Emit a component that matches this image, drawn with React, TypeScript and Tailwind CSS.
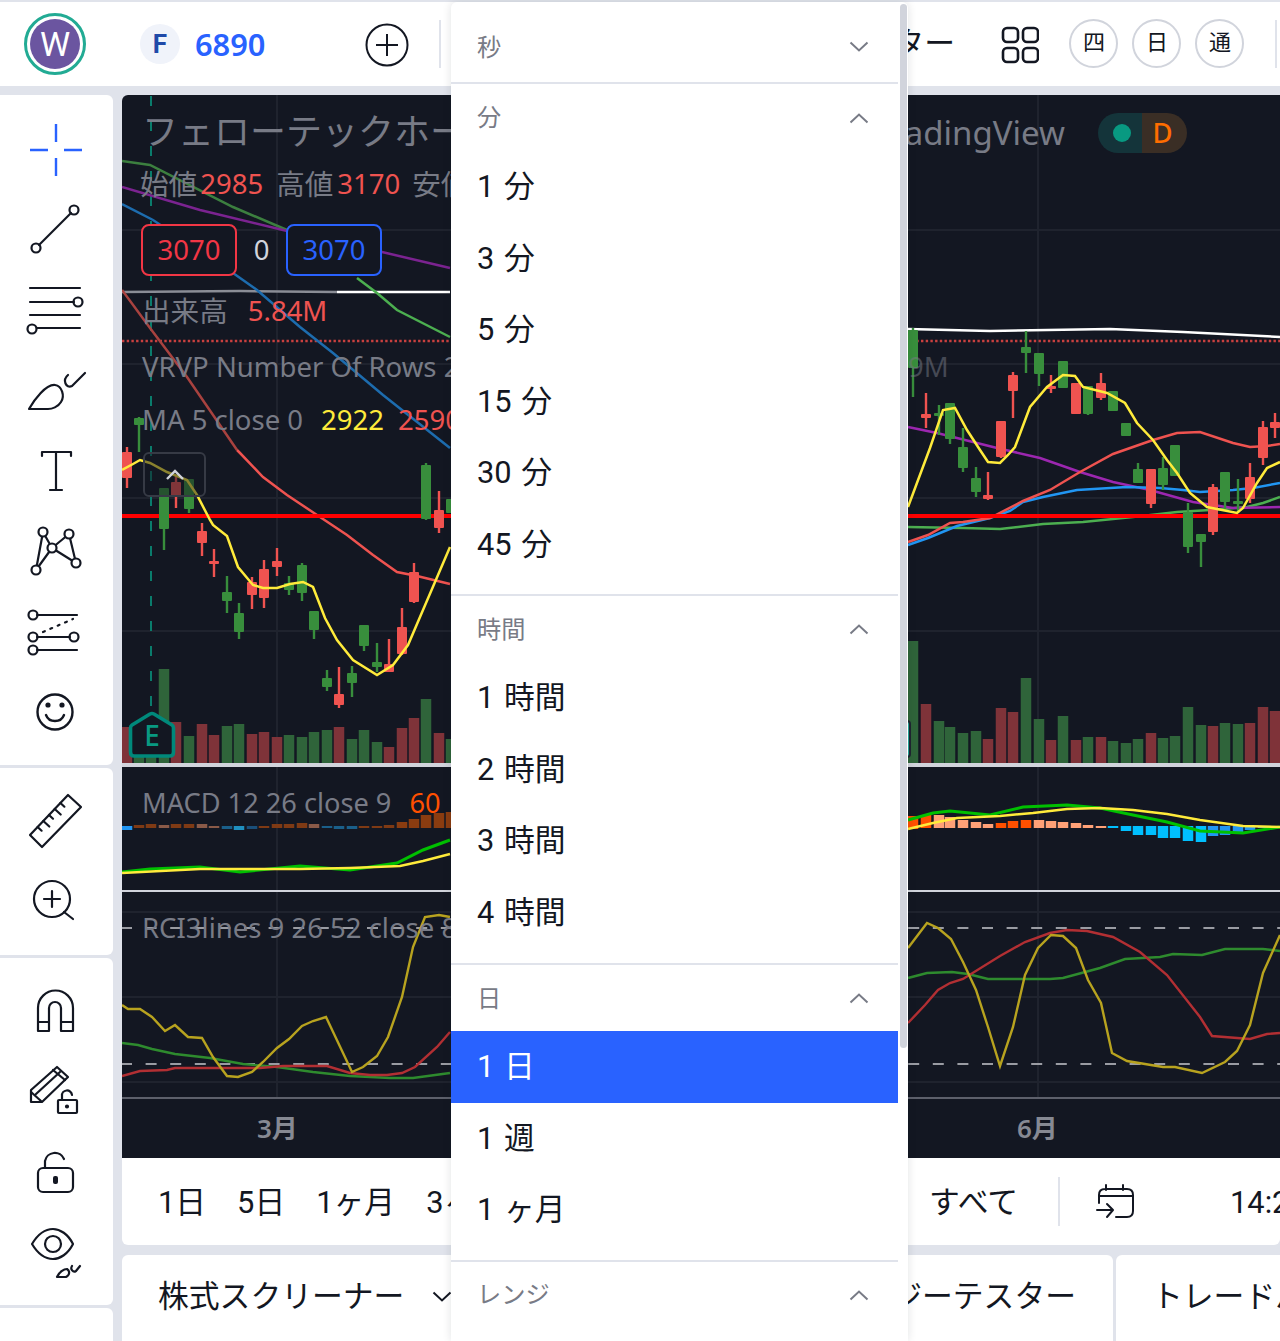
import React from "react";

type C = [number, number, number, number, number, "r" | "g"];
const RED = "#ef5350";
const GREEN = "#388e3c";
const candles: C[] = [
  [127, 447, 488, 452, 478, "r"],
  [139, 417, 452, 418, 425, "g"],
  [164, 488, 550, 488, 529, "g"],
  [176, 475, 508, 482, 497, "r"],
  [189, 479, 513, 479, 509, "g"],
  [202, 523, 556, 531, 543, "r"],
  [214, 549, 577, 561, 564, "r"],
  [227, 576, 613, 592, 601, "g"],
  [239, 603, 639, 613, 632, "g"],
  [252, 577, 609, 582, 595, "r"],
  [264, 560, 608, 569, 598, "r"],
  [277, 548, 576, 561, 567, "r"],
  [289, 576, 595, 583, 590, "g"],
  [302, 563, 601, 565, 593, "g"],
  [314, 611, 639, 611, 630, "g"],
  [327, 670, 691, 678, 687, "g"],
  [339, 667, 708, 694, 705, "r"],
  [352, 666, 697, 673, 683, "g"],
  [364, 625, 651, 625, 646, "g"],
  [377, 643, 672, 662, 667, "g"],
  [389, 639, 672, 664, 672, "r"],
  [402, 608, 655, 627, 654, "r"],
  [414, 563, 603, 572, 602, "r"],
  [426, 463, 520, 465, 519, "g"],
  [439, 491, 533, 510, 528, "r"],
  [451, 499, 513, 499, 513, "g"],
  [913, 328, 397, 330, 368, "g"],
  [926, 393, 428, 414, 418, "r"],
  [939, 405, 435, 413, 416, "g"],
  [950, 403, 444, 403, 439, "g"],
  [963, 428, 472, 447, 468, "g"],
  [976, 467, 497, 478, 492, "g"],
  [988, 472, 500, 495, 499, "r"],
  [1001, 421, 458, 421, 457, "r"],
  [1013, 372, 418, 375, 391, "r"],
  [1026, 331, 373, 347, 353, "g"],
  [1039, 353, 386, 353, 374, "g"],
  [1051, 375, 393, 386, 389, "r"],
  [1063, 361, 388, 361, 388, "g"],
  [1076, 383, 414, 383, 414, "r"],
  [1088, 386, 415, 386, 414, "g"],
  [1101, 373, 400, 383, 398, "r"],
  [1113, 391, 411, 391, 411, "g"],
  [1126, 423, 436, 423, 436, "g"],
  [1138, 463, 483, 469, 483, "g"],
  [1151, 469, 508, 469, 504, "r"],
  [1163, 457, 490, 468, 485, "g"],
  [1175, 445, 476, 445, 476, "g"],
  [1188, 503, 553, 512, 547, "g"],
  [1201, 534, 567, 534, 542, "g"],
  [1213, 484, 535, 487, 532, "r"],
  [1225, 472, 509, 472, 502, "g"],
  [1238, 479, 513, 501, 503, "g"],
  [1250, 463, 503, 477, 499, "r"],
  [1263, 421, 465, 427, 458, "r"],
  [1275, 413, 438, 422, 428, "r"],
];
const volumes: [number, number, "r" | "g"][] = [
  [127, 727, "r"], [139, 724, "g"], [151, 724, "g"], [164, 669, "g"], [176, 722, "r"], [189, 736, "g"], [202, 724, "r"], [214, 735, "r"],
  [227, 726, "g"], [239, 724, "g"], [252, 734, "r"], [264, 732, "r"], [277, 737, "r"], [289, 735, "g"],
  [302, 737, "g"], [314, 732, "g"], [327, 730, "g"], [339, 727, "r"], [352, 739, "g"], [364, 730, "g"],
  [377, 742, "g"], [389, 747, "r"], [402, 728, "r"], [414, 718, "r"], [426, 699, "g"], [439, 733, "r"], [451, 739, "g"],
  [913, 641, "g"], [926, 704, "r"], [939, 721, "g"], [950, 727, "g"], [963, 733, "g"], [976, 731, "g"],
  [988, 739, "r"], [1001, 708, "r"], [1013, 712, "r"], [1026, 678, "g"], [1039, 719, "g"], [1051, 740, "r"],
  [1063, 716, "g"], [1076, 740, "r"], [1088, 737, "g"], [1101, 737, "r"], [1113, 741, "g"], [1126, 743, "g"],
  [1138, 739, "g"], [1151, 733, "r"], [1163, 738, "g"], [1175, 736, "g"], [1188, 707, "g"], [1201, 725, "g"],
  [1213, 726, "r"], [1225, 723, "g"], [1238, 724, "g"], [1250, 723, "r"], [1263, 707, "r"], [1275, 711, "r"],
];
const macdBars: [number, number, number, string][] = [
  [127, 826, 830, "#2196f3"], [139, 825, 828, "#7f3a14"], [151, 824, 828, "#7f3a14"], [164, 825, 828, "#8a5a48"],
  [176, 824, 828, "#7f3a14"], [189, 824, 828, "#7f3a14"], [202, 824, 828, "#8a5a48"], [214, 826, 828, "#8a5a48"],
  [227, 826, 829, "#1a5f8a"], [239, 826, 830, "#1f8fbf"], [252, 826, 829, "#1a4f7a"], [264, 826, 828, "#7f3a14"],
  [277, 824, 828, "#7f3a14"], [289, 824, 828, "#7f3a14"], [302, 823, 828, "#7f3a14"], [314, 824, 828, "#8a5a48"],
  [327, 826, 828, "#1a5f8a"], [339, 826, 829, "#1a5f8a"], [352, 826, 829, "#1a5f8a"], [364, 826, 828, "#7f3a14"],
  [377, 826, 828, "#7f3a14"], [389, 825, 828, "#7f3a14"], [402, 822, 828, "#8a3c10"], [414, 819, 828, "#8a3c10"],
  [426, 815, 828, "#8a3c10"], [439, 813, 828, "#8a3c10"], [451, 812, 828, "#8a3c10"],
  [913, 816, 829, "#ff5000"], [926, 815, 828, "#ff5000"], [939, 815, 828, "#ffa177"], [950, 817, 828, "#ffa177"],
  [963, 820, 828, "#ffa177"], [976, 822, 828, "#ffa177"], [988, 824, 828, "#ffa177"], [1001, 823, 828, "#ff5000"],
  [1013, 821, 828, "#ff5000"], [1026, 820, 828, "#ff5000"], [1039, 820, 828, "#ffa177"], [1051, 821, 828, "#ffa177"],
  [1063, 822, 828, "#ffa177"], [1076, 823, 828, "#ffa177"], [1088, 825, 828, "#ffa177"], [1101, 826, 828, "#ffa177"],
  [1113, 826, 828, "#00bfff"], [1126, 826, 831, "#00bfff"], [1138, 826, 835, "#00bfff"], [1151, 826, 835, "#00bfff"],
  [1163, 826, 838, "#00bfff"], [1175, 826, 838, "#00bfff"], [1188, 826, 841, "#00bfff"], [1201, 826, 842, "#00bfff"],
  [1213, 826, 836, "#2196f3"], [1225, 826, 835, "#2196f3"], [1238, 826, 834, "#2196f3"], [1250, 826, 830, "#2196f3"],
  [1263, 826, 828, "#2196f3"], [1275, 826, 828, "#ff5000"],
];

const LINE = {
  yellowL: "122,470 133,464 140,460 150,463 167,472 187,480 197,495 210,520 213,525 227,536 238,567 253,585 263,588 277,588 290,584 303,582 313,587 325,618 337,640 353,660 377,675 393,665 408,645 423,610 450,547",
  yellowR: "908,507 930,448 943,410 955,408 967,430 980,450 988,462 1000,463 1008,455 1015,447 1030,407 1047,387 1063,375 1075,376 1083,387 1107,393 1125,403 1137,423 1153,440 1167,460 1177,473 1190,493 1207,507 1237,513 1243,508 1257,483 1267,468 1280,462",
  redL0: "122,290 150,328 187,377 237,450",
  redL: "237,450 240,453 263,477 287,495 317,515 347,535 373,555 397,572 417,576 450,584",
  redR: "908,542 928,535 950,523 963,522 990,518 1023,501 1050,490 1080,472 1113,454 1153,440 1177,433 1200,432 1233,443 1250,447 1267,446 1280,444",
  blueL: "122,204 153,220 233,273 257,290 300,327 333,353 383,395 450,448",
  blueR: "908,545 928,538 957,526 990,518 1010,511 1023,502 1043,497 1077,490 1127,487 1160,488 1183,490 1200,492 1233,490 1253,488 1280,483",
  purpleL: "122,187 200,210 283,230 382,252 450,268",
  purpleR: "908,427 937,433 997,448 1040,458 1080,472 1113,482 1150,490 1193,502 1233,508 1280,507",
  greenL0: "122,161 150,165 233,207 287,230",
  greenL: "357,278 377,293 397,310 450,337",
  greenR: "908,527 963,528 1000,529 1043,524 1083,522 1133,517 1177,512 1210,510 1247,507 1263,503 1280,497",
  whiteR: "908,329 990,331 1110,329 1183,332 1280,337",
};

function MainPane() {
  const sw = 2.5;
  return (
    <svg viewBox="122 95 1158 668" width={1158} height={668} className="absolute inset-0">
      {[277, 1038].map((x) => <line key={x} x1={x} x2={x} y1={95} y2={763} stroke="#1f232e" strokeWidth={2} />)}
      {[230, 364, 498, 631].map((y) => <line key={y} x1={122} x2={1280} y1={y} y2={y} stroke="#1f232e" strokeWidth={2} />)}
      <line x1={151} x2={151} y1={96} y2={720} stroke="#0a7c6c" strokeWidth={2} strokeDasharray="10 15" />
      {volumes.map(([x, t, c]) => (
        <rect key={x} x={x - 5.25} y={t} width={10.5} height={763 - t} fill={c === "r" ? "#7f3339" : "#2f643a"} />
      ))}
      <line x1={122} x2={1280} y1={341} y2={341} stroke="#c9403f" strokeWidth={2.5} strokeDasharray="2.4 2.3" />
      <polyline points="122,292 240,291 337,292" fill="none" stroke="#8a8d96" strokeWidth={sw} />
      <polyline points="337,292 450,292" fill="none" stroke="#ffffff" strokeWidth={sw} />
      <polyline points={LINE.whiteR} fill="none" stroke="#ffffff" strokeWidth={sw} />
      <polyline points={LINE.greenL0} fill="none" stroke="#3c7f3f" strokeWidth={sw} />
      <polyline points={LINE.greenL} fill="none" stroke="#4caf50" strokeWidth={sw} />
      <polyline points={LINE.greenR} fill="none" stroke="#4caf50" strokeWidth={sw} />
      <polyline points={LINE.purpleL} fill="none" stroke="#7b2390" strokeWidth={sw} />
      <polyline points={LINE.purpleR} fill="none" stroke="#9c27b0" strokeWidth={sw} />
      <polyline points={LINE.blueL} fill="none" stroke="#1d6cae" strokeWidth={sw} />
      <polyline points={LINE.blueR} fill="none" stroke="#2196f3" strokeWidth={sw} />
      <polyline points={LINE.redL0} fill="none" stroke="#a8423f" strokeWidth={sw} />
      <polyline points={LINE.redL} fill="none" stroke={RED} strokeWidth={sw} />
      <polyline points={LINE.redR} fill="none" stroke={RED} strokeWidth={sw} />
      <line x1={122} x2={1280} y1={516} y2={516} stroke="#ff0000" strokeWidth={4} />
      {candles.map(([x, wt, wb, bt, bb, c]) => (
        <g key={x} fill={c === "r" ? RED : GREEN}>
          <rect x={x - 1.2} y={wt} width={2.4} height={wb - wt} />
          <rect x={x - 5} y={bt} width={10} height={Math.max(bb - bt, 3)} rx={1} />
        </g>
      ))}
      <polyline points={LINE.yellowL} fill="none" stroke="#ffeb3b" strokeWidth={sw} />
      <polyline points={LINE.yellowR} fill="none" stroke="#ffeb3b" strokeWidth={sw} />
      <path d="M130.5 728 Q130.5 726 132 725 L150 714 Q152 713 154 714 L172 725 Q173.5 726 173.5 728 V752 Q173.5 756 170 756 H134 Q130.5 756 130.5 752 Z" fill="#131722" stroke="#00897b" strokeWidth={3.6} strokeLinejoin="round" />
      <rect x={134} y={759} width={10} height={4} fill="#2f643a" />
      <rect x={146} y={759} width={10} height={4} fill="#2f643a" />
      <rect x={159} y={759} width={10} height={4} fill="#2f643a" />
      <rect x={900} y={721} width={10} height={36} rx={3} fill="#26a69a" stroke="#1f2530" strokeWidth={2} />
    </svg>
  );
}

function MacdPane() {
  const g1 = "122,872 150,869 200,867 240,872 300,866 350,870 397,863 423,850 450,840";
  const y1 = "122,873 200,869 300,869 350,868 400,866 423,861 450,854";
  const g2 = "908,820 933,813 950,811 990,815 1023,807 1067,805 1100,808 1133,815 1167,822 1200,831 1243,833 1280,827";
  const y2 = "908,829 933,823 957,818 1000,816 1033,813 1067,809 1100,808 1133,810 1167,814 1200,820 1243,826 1280,827";
  return (
    <svg viewBox="122 767 1158 123" width={1158} height={123} className="absolute inset-0">
      {[277, 1038].map((x) => <line key={x} x1={x} x2={x} y1={767} y2={890} stroke="#1f232e" strokeWidth={2} />)}
      {macdBars.map(([x, t, b, c]) => <rect key={x} x={x - 5.25} y={t} width={10.5} height={b - t} fill={c} />)}
      <polyline points={g1} fill="none" stroke="#00c000" strokeWidth={3} />
      <polyline points={g2} fill="none" stroke="#00c000" strokeWidth={3} />
      <polyline points={y1} fill="none" stroke="#ffeb3b" strokeWidth={2.5} />
      <polyline points={y2} fill="none" stroke="#ffeb3b" strokeWidth={2.5} />
    </svg>
  );
}

function RciPane() {
  const yL = "122,1005 128,1009 140,1009 152,1017 165,1031 175,1025 188,1037 202,1038 213,1057 227,1076 238,1077 252,1072 263,1062 277,1048 289,1039 302,1026 313,1021 326,1017 352,1072 363,1067 377,1056 388,1037 402,997 413,947 425,917 439,915 450,917";
  const yR = "908,948 927,923 938,928 951,939 963,962 976,990 988,1027 1000,1066 1013,1027 1025,975 1038,948 1051,935 1063,936 1076,948 1088,980 1101,1003 1112,1053 1127,1061 1163,1067 1175,1067 1202,1073 1225,1062 1237,1051 1250,1025 1263,973 1280,935";
  const gL = "122,1043 138,1045 152,1049 175,1054 210,1058 243,1064 277,1067 313,1072 350,1076 390,1078 413,1078 450,1073";
  const gR = "908,978 927,973 952,972 968,974 988,979 1050,979 1063,978 1100,968 1125,959 1160,957 1173,954 1202,955 1225,949 1263,949 1280,951";
  const rL = "122,1076 140,1071 167,1070 175,1068 213,1068 260,1068 283,1066 327,1066 350,1073 370,1075 387,1075 402,1073 415,1067 437,1047 450,1032";
  const rR = "908,1023 925,1005 938,990 950,983 963,979 1000,956 1025,942 1050,933 1067,930 1087,931 1113,937 1140,952 1167,975 1200,1017 1212,1036 1250,1039 1267,1034 1280,1033";
  return (
    <svg viewBox="122 892 1158 205" width={1158} height={205} className="absolute inset-0">
      {[277, 1038].map((x) => <line key={x} x1={x} x2={x} y1={892} y2={1097} stroke="#1f232e" strokeWidth={2} />)}
      {[912, 997, 1082].map((y) => <line key={y} x1={122} x2={1280} y1={y} y2={y} stroke="#1f232e" strokeWidth={2} />)}
      {[928, 1064].map((y) => <line key={y} x1={122} x2={1280} y1={y} y2={y} stroke="#9a9ca3" strokeWidth={2} strokeDasharray="11 13.6" strokeDashoffset="1" />)}
      <polyline points={gL} fill="none" stroke="#2e8b2e" strokeWidth={2.4} />
      <polyline points={gR} fill="none" stroke="#2e8b2e" strokeWidth={2.4} />
      <polyline points={rL} fill="none" stroke="#b22f33" strokeWidth={2.4} />
      <polyline points={rR} fill="none" stroke="#b22f33" strokeWidth={2.4} />
      <polyline points={yL} fill="none" stroke="#b8a31f" strokeWidth={2.4} />
      <polyline points={yR} fill="none" stroke="#b8a31f" strokeWidth={2.4} />
    </svg>
  );
}

const S = { fill: "none", stroke: "#131722", strokeWidth: 2.2, strokeLinecap: "round" as const, strokeLinejoin: "round" as const };

function Tool({ children }: { children: React.ReactNode }) {
  return (
    <div className="flex h-20 items-center justify-start pl-[24px]">
      <svg width={64} height={64} viewBox="0 0 64 64" className="overflow-visible">{children}</svg>
    </div>
  );
}

function Sidebar() {
  return (
    <div className="flex w-[113px] shrink-0 flex-col gap-[3px]">
      <div className="h-[670px] rounded-r-[6px] bg-white pt-[15px]">
        <Tool><path d="M32 6V24M32 40V58M6 32H24M40 32H58" fill="none" stroke="#2962ff" strokeWidth={2.4} /></Tool>
        <Tool><g {...S}><circle cx={50} cy={12} r={4.5} /><circle cx={12} cy={50} r={4.5} /><path d="M47 15L15 47" /></g></Tool>
        <Tool><g {...S}><path d="M6 10H56M6 24H50M6 37H56M13 50H56" /><circle cx={54} cy={24} r={4.5} /><circle cx={8} cy={51} r={4.5} /></g></Tool>
        <Tool><g {...S} transform="translate(0 2)"><path d="M5 49C10 40 22 24 31 25C38 26 41 36 37 42C34 47 28 49 24 49Z" /><path d="M44 15C38 20 42 29 48 26L61 13" /></g></Tool>
        <Tool><g {...S}><path d="M18 18V14H47V18M32 14V52M26 52H38" /></g></Tool>
        <Tool><g {...S}><path d="M19 14L12 52L28 30L45 16L52 45L28 30L19 14" /><g fill="#fff"><circle cx={19} cy={14} r={4.5} /><circle cx={45} cy={16} r={4.5} /><circle cx={28} cy={30} r={4.5} /><circle cx={12} cy={52} r={4.5} /><circle cx={52} cy={45} r={4.5} /></g></g></Tool>
        <Tool><g {...S} transform="translate(0 2)"><path d="M13 15H53M13 37H46M13 50H53" /><circle cx={9} cy={15} r={4.5} /><circle cx={9} cy={37} r={4.5} /><circle cx={50} cy={37} r={4.5} /><circle cx={9} cy={50} r={4.5} /><path d="M19 32L49 19" strokeDasharray="2 6" /></g></Tool>
        <Tool><g {...S} transform="translate(0 2)"><circle cx={31} cy={32} r={17.5} strokeWidth={2.4} /><circle cx={24} cy={25} r={2.6} fill="#131722" stroke="none" /><circle cx={38} cy={25} r={2.6} fill="#131722" stroke="none" /><path d="M22 35C25 43 37 43 40 35" strokeWidth={2.4} /></g></Tool>
      </div>
      <div className="h-[187px] rounded-r-[6px] bg-white pt-[12px]">
        <Tool><g {...S}><path d="M6 47L44 7L57 19L18 59Z" /><path d="M13.6 39L17.6 42.7M19.3 33L25.3 38.5M25 27L29 30.7M30.7 21L36.7 26.5M36.4 15L40.4 18.7" /></g></Tool>
        <Tool><g {...S}><circle cx={28} cy={31} r={18} /><path d="M20 31H36M28 23V39M40 44L49 51" /></g></Tool>
      </div>
      <div className="h-[347px] rounded-r-[6px] bg-white pt-[13px]">
        <Tool><g {...S}><path d="M14 52V29A17.5 17.5 0 0 1 49 29V52H37V29A6 6 0 0 0 25 29V52Z" /><path d="M14 43H25M37 43H49" /></g></Tool>
        <Tool><g {...S}><path d="M7 43V31L33 8L44 18L18 43Z" /><path d="M29 11L41 21M7 33L17 42M12 35L36 13" /><rect x={34} y={41} width={19} height={13} rx={1} /><path d="M38 41V37A5 5 0 0 1 48 36" /><circle cx={43} cy={47.5} r={1} /></g></Tool>
        <Tool><g {...S}><rect x={14} y={29} width={35} height={24} rx={5} /><path d="M21 29V22A10 10 0 0 1 40 20" /><rect x={29} y={37} width={5} height={8} rx={2} fill="#131722" stroke="none" /></g></Tool>
        <Tool><g {...S}><path d="M8 25C14 15 22 10 29 10C36 10 44 15 49 25C44 35 36 40 29 40C22 40 14 35 8 25Z" /><circle cx={29} cy={25} r={8} /><path d="M33 58C35 53 40 50 43 50C46 52 46 56 42 58Z" /><path d="M48 47C46 50 49 54 52 52L56 47" /></g></Tool>
      </div>
      <div className="flex-1 rounded-tr-[6px] bg-white" />
    </div>
  );
}

function Header() {
  return (
    <div className="flex h-[84px] shrink-0 items-center bg-white">
      <div className="ml-[24px] flex h-[62px] w-[62px] items-center justify-center rounded-full border-[3px] border-[#22ab94]">
        <div className="flex h-[50px] w-[50px] items-center justify-center rounded-full bg-[#6b55a0] text-[34px] leading-none text-white">W</div>
      </div>
      <div className="ml-[54px] flex h-[40px] w-[40px] items-center justify-center rounded-full bg-[#f0f3fa] text-[26px] font-bold text-[#1f4aa8]">F</div>
      <div className="chart-font ml-[15px] mt-[1px] text-[30.8px] font-semibold leading-none text-[#2962ff]">6890</div>
      <svg width={44} height={44} viewBox="0 0 44 44" className="ml-[100px] mt-[2px]" fill="none" stroke="#131722" strokeWidth={2}>
        <circle cx={22} cy={22} r={20.5} /><path d="M22 11V33M11 22H33" />
      </svg>
      <div className="ml-[30px] h-[48px] w-[2px] bg-[#e0e3eb]" />
      <div className="ml-[298px] w-[215px] shrink-0 whitespace-nowrap text-[30.8px] text-[#131722]">インジケーター</div>
      <svg width={38} height={38} viewBox="0 0 38 38" className="ml-[47px] mt-[1px]" fill="none" stroke="#131722" strokeWidth={2.6}>
        <rect x={2} y={2} width={15} height={14} rx={4} /><rect x={22} y={2} width={15} height={14} rx={4} />
        <rect x={2} y={22} width={15} height={14} rx={4} /><rect x={22} y={22} width={15} height={14} rx={4} />
      </svg>
      {["四", "日", "通"].map((t, i) => (
        <div key={t} className={`mb-[2px] flex h-[49px] w-[49px] items-center justify-center rounded-full border-2 border-[#d1d4dc] text-[22px] leading-none text-[#131722] ${i === 0 ? "ml-[30px]" : "ml-[14px]"}`}>{t}</div>
      ))}
      <div className="ml-[31px] h-[48px] w-[2px] bg-[#e0e3eb]" />
    </div>
  );
}

function Legend() {
  const gray = "text-[#787b86]";
  const cjk = "text-[28.6px] text-[#787b86]";
  return (
    <div className="chart-font absolute inset-0 flex flex-col pl-[20px] text-[27.5px] leading-none">
      <div className="-mt-[2px] flex h-[78px] w-[923px] shrink-0 items-center justify-between text-[#787b86]">
        <span className="whitespace-nowrap text-[36px]">フェローテックホールディングス・1日</span>
        <span className="whitespace-nowrap text-[33px]">TradingView</span>
      </div>
      <div className="-ml-[2px] flex h-[26px] shrink-0 items-center whitespace-nowrap">
        <span className={cjk}>始値</span><span className="ml-[3px] text-[#ef5350]">2985</span>
        <span className={`ml-[13px] ${cjk}`}>高値</span><span className="ml-[4px] text-[#ef5350]">3170</span>
        <span className={`ml-[12px] ${cjk}`}>安値</span><span className="ml-[4px] text-[#ef5350]">2590</span>
      </div>
      <div className="-ml-[1px] mt-[27px] flex h-[52px] shrink-0 items-center">
        <div className="flex h-[52px] w-[96px] items-center justify-center rounded-[8px] border-2 border-[#f23645] bg-[#131722] text-[#f23645]">3070</div>
        <div className="w-[49px] text-center text-[#d1d4dc]">0</div>
        <div className="flex h-[52px] w-[96px] items-center justify-center rounded-[8px] border-2 border-[#2962ff] bg-[#131722] text-[#2962ff]">3070</div>
      </div>
      <div className="mt-[10px] flex h-[50px] shrink-0 items-center whitespace-nowrap">
        <span className={cjk}>出来高</span><span className="ml-[20px] text-[#ef5350]">5.84M</span>
      </div>
      <div className={`mt-[6px] flex h-[50px] shrink-0 items-center whitespace-nowrap ${gray}`}>VRVP Number Of Rows 24 Up/Down 70</div>
      <div className="mt-[3px] flex h-[50px] shrink-0 items-center whitespace-nowrap">
        <span className={gray}>MA 5 close 0</span><span className="ml-[18px] text-[#ffeb3b]">2922</span><span className="ml-[14px] text-[#ef5350]">2590</span>
      </div>
      <div className="ml-[1px] mt-[7px] flex h-[45px] w-[63px] shrink-0 items-center justify-center rounded-[6px] border-2 border-[#363a45] bg-[#131722]/50">
        <svg width={20} height={12} viewBox="0 0 20 12" fill="none" stroke="#d1d4dc" strokeWidth={2.4}><path d="M2 10L10 2L18 10" /></svg>
      </div>
    </div>
  );
}

function Chart() {
  return (
    <div className="flex h-[1063px] shrink-0 flex-col overflow-hidden rounded-tl-[6px] bg-[#131722]">
      <div className="relative h-[668px] shrink-0">
        <MainPane />
        <Legend />
        <span className="chart-font absolute left-[786px] top-[251px] text-[27.5px] text-[#787b86]/50">9M</span>
        <div className="absolute left-[976px] top-[18px] flex h-[40px] w-[89px] overflow-hidden rounded-full">
          <div className="flex w-[44px] items-center justify-center bg-[#14343a]"><div className="ml-[4px] h-[18px] w-[18px] rounded-full bg-[#089981]" /></div>
          <div className="chart-font flex flex-1 items-center justify-center bg-[#3a2e25] pr-[4px] text-[27.5px] font-medium leading-none text-[#ff6d00]">D</div>
        </div>
        <div className="chart-font absolute left-[8px] top-[620px] flex w-[44px] justify-center text-[28px] font-medium leading-[40px] text-[#089981]">E</div>
      </div>
      <div className="h-[4px] shrink-0 bg-[#d1d4dc]" />
      <div className="relative h-[123px] shrink-0">
        <MacdPane />
        <div className="chart-font absolute left-[20px] top-[16px] flex items-center whitespace-nowrap text-[27.2px] leading-[40px]">
          <span className="text-[#787b86]">MACD 12 26 close 9</span><span className="ml-[18px] text-[#ff5000]">60</span>
        </div>
      </div>
      <div className="h-[2px] shrink-0 bg-[#d1d4dc]" />
      <div className="relative h-[205px] shrink-0">
        <RciPane />
        <div className="chart-font absolute left-[20px] top-[16px] whitespace-nowrap text-[27.5px] leading-[40px] text-[#787b86]">RCI3lines 9 26 52 close 8</div>
      </div>
      <div className="chart-font relative h-[61px] shrink-0 border-t-2 border-[#5d606b] text-[26px] font-semibold leading-none text-[#868993]">
        <div className="absolute left-[135px] top-[16px] whitespace-nowrap">3月</div>
        <div className="absolute left-[895px] top-[16px] whitespace-nowrap">6月</div>
      </div>
    </div>
  );
}

function Chev({ up, color = "#787b86" }: { up: boolean; color?: string }) {
  return (
    <svg width={20} height={12} viewBox="0 0 20 12" fill="none" stroke={color} strokeWidth={2} className="shrink-0">
      <path d={up ? "M1.5 10.5L10 2.5L18.5 10.5" : "M1.5 1.5L10 9.5L18.5 1.5"} />
    </svg>
  );
}

function Dropdown() {
  const Head = ({ t, open, h = "h-[66px]" }: { t: string; open: boolean; h?: string }) => (
    <div className={`flex ${h} items-center justify-between pl-[26px] pr-[29px] text-[24.2px] text-[#787b86]`}>
      <span className="pt-[2px]">{t}</span>
      <Chev up={open} />
    </div>
  );
  const Item = ({ t, sel }: { t: string; sel?: boolean }) => (
    <div className={`flex h-[71.5px] items-center pl-[26px] text-[30.8px] [word-spacing:2px] ${sel ? "bg-[#2962ff] text-white" : "text-[#131722]"}`}><span className="pt-[1px]">{t}</span></div>
  );
  return (
    <div className="absolute left-[451px] top-[2px] flex h-[1339px] w-[457px] overflow-hidden rounded-t-[6px] bg-white shadow-[0_0_10px_rgba(19,23,34,0.12)]">
      <div className="w-[447px] shrink-0">
        <div className="border-b-2 border-[#e0e3eb] pb-[2px] pt-[12px]"><Head t="秒" open={false} /></div>
        <div className="border-b-2 border-[#e0e3eb] pb-[14px]">
          <Head t="分" open h="h-[67px]" />
          {["1 分", "3 分", "5 分", "15 分", "30 分", "45 分"].map((t) => <Item key={t} t={t} />)}
        </div>
        <div className="border-b-2 border-[#e0e3eb] pb-[15px]">
          <Head t="時間" open />
          {["1 時間", "2 時間", "3 時間", "4 時間"].map((t) => <Item key={t} t={t} />)}
        </div>
        <div className="border-b-2 border-[#e0e3eb] pb-[14px]">
          <Head t="日" open />
          <Item t="1 日" sel />
          <Item t="1 週" />
          <Item t="1 ヶ月" />
        </div>
        <Head t="レンジ" open />
      </div>
      <div className="flex-1 pl-[2px] pt-[2px]">
        <div className="h-[1044px] w-[7px] rounded-full bg-[#d1d4dc]" />
      </div>
    </div>
  );
}

function Bottom() {
  return (
    <>
      <div className="flex h-[87px] shrink-0 items-center overflow-hidden rounded-b-[6px] bg-white text-[30.8px] leading-none text-[#131722]">
        <div className="flex w-[807px] shrink-0 items-center gap-[31px] whitespace-nowrap pl-[36px] pt-[4px]">
          <span>1日</span><span>5日</span><span>1ヶ月</span><span>3ヶ月</span>
        </div>
        <span className="whitespace-nowrap pt-[4px]">すべて</span>
        <div className="ml-[40px] h-[49px] w-[2px] shrink-0 bg-[#e0e3eb]" />
        <svg width={40} height={36} viewBox="0 0 40 36" className="ml-[36px] shrink-0" fill="none" stroke="#131722" strokeWidth={2} strokeLinecap="round" strokeLinejoin="round">
          <path d="M3 19V11Q3 5 9 5H31Q37 5 37 11V27Q37 33 31 33H20M10 1V6M27 1V6M3 12H37M1 26H17M11 20L17 26L11 33" />
        </svg>
        <span className="ml-[94px] whitespace-nowrap pt-[4px]">14:25:30 (UTC+9)</span>
      </div>
      <div className="mt-[10px] flex flex-1 gap-[3px] text-[30.8px] leading-none text-[#131722]">
        <div className="flex w-[336px] shrink-0 items-center rounded-t-[6px] bg-white pb-[2px] pl-[36px]">
          <span className="whitespace-nowrap">株式スクリーナー</span>
          <span className="ml-[28px]"><Chev up={false} color="#131722" /></span>
        </div>
        <div className="w-[240px] shrink-0 rounded-t-[6px] bg-white" />
        <div className="flex w-[409px] shrink-0 items-center justify-end rounded-t-[6px] bg-white pb-[2px] pr-[37px]">
          <span className="whitespace-nowrap">ストラテジーテスター</span>
        </div>
        <div className="flex flex-1 items-center overflow-hidden rounded-tl-[6px] bg-white pb-[2px] pl-[36px]">
          <span className="whitespace-nowrap">トレードパネル</span>
        </div>
      </div>
    </>
  );
}

export default function App() {
  return (
    <div className="relative flex h-[1341px] w-[1280px] flex-col overflow-hidden bg-[#e0e3eb] pt-[2px] [font-family:Roboto,'Noto_Sans_CJK_JP',sans-serif] [&_.chart-font]:[font-family:'Noto_Sans','Noto_Sans_CJK_JP',sans-serif]">
      <Header />
      <div className="mt-[9px] flex min-h-0 flex-1 gap-[9px]">
        <Sidebar />
        <div className="flex min-w-0 flex-1 flex-col">
          <Chart />
          <Bottom />
        </div>
      </div>
      <Dropdown />
    </div>
  );
}
